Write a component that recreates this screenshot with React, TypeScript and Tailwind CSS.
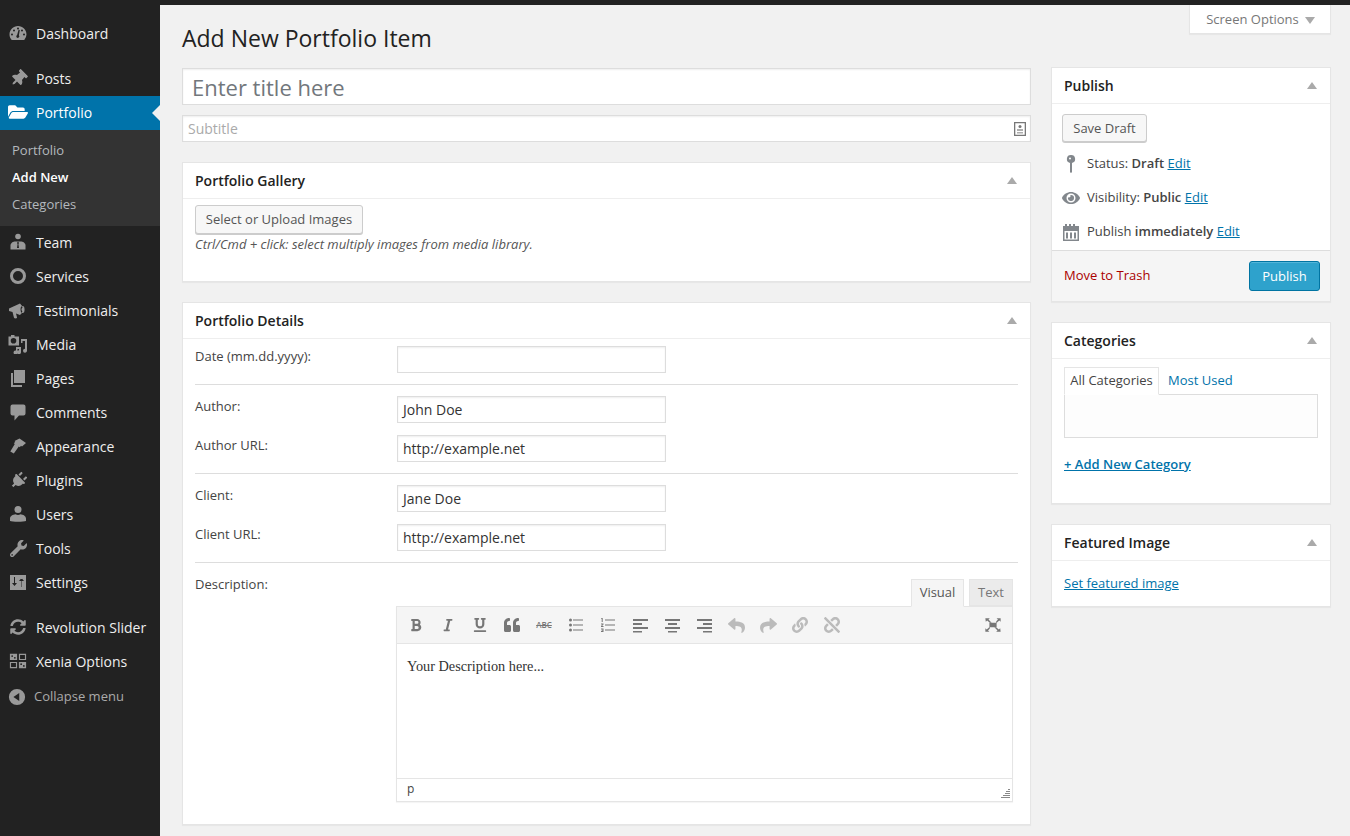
import type { ReactNode } from "react";
import {
  FaBold,
  FaItalic,
  FaUnderline,
  FaQuoteLeft,
  FaLink,
  FaUnlink,
  FaReply,
  FaShare,
  FaThumbtack,
  FaFolderOpen,
  FaPlug,
  FaWrench,
  FaSyncAlt,
  FaEye,
} from "react-icons/fa";

const Gauge = () => (
  <svg viewBox="0 0 20 20" className="w-5 h-5" fill="currentColor">
    <path d="M3.76 17h12.48A8.500 8.500 0 0 0 18.500 11.500c0-4.700-3.800-8.500-8.500-8.500s-8.500 3.800-8.500 8.500c0 2 .8 4 2.260 5.500zM10 4.500a1 1 0 1 1 0 2 1 1 0 0 1 0-2zM6 6.500a1 1 0 1 1 0 2 1 1 0 0 1 0-2zm8 0a1 1 0 1 1 0 2 1 1 0 0 1 0-2zM4 10.500a1 1 0 1 1 0 2 1 1 0 0 1 0-2zm12 0a1 1 0 1 1 0 2 1 1 0 0 1 0-2zm-4.200-3.400l-.9 5.200a1.500 1.500 0 1 1-1.800-.3l1.500-5.200z" fillRule="evenodd" />
  </svg>
);

const TeamIcon = () => (
  <svg viewBox="0 0 20 20" className="w-5 h-5" fill="currentColor">
    <circle cx="10" cy="4.500" r="2.800" />
    <path d="M2.500 17.500v-4C2.500 11 5 9.500 7.500 9.500h5c2.500 0 5 1.500 5 4v4z" />
    <path d="M10 9.500l-1 1.500.6 1-.6 4h2l-.6-4 .6-1z" fill="#222" />
  </svg>
);

const RingIcon = () => (
  <svg viewBox="0 0 20 20" className="w-5 h-5" fill="none" stroke="currentColor" strokeWidth="3">
    <circle cx="10" cy="10" r="6.500" />
  </svg>
);

const MegaphoneIcon = () => (
  <svg viewBox="0 0 20 20" className="w-5 h-5" fill="currentColor">
    <path fillRule="evenodd" d="M1 8.500L12 3.500a5 6.500 0 0 1 0 11.500L8 13.500 9 17.500c.2 1-2.500 1.300-3 .3L4.500 12 1 11zM14.500 6a2 3.500 0 1 0 .1 7 2 3.500 0 0 0-.1-7z" />
    <ellipse cx="14.500" cy="9.500" rx="1" ry="1.800" />
  </svg>
);

const MediaIcon = () => (
  <svg viewBox="0 0 20 20" className="w-5 h-5" fill="currentColor">
    <path fillRule="evenodd" d="M0.500 2.500h2.500V1h3.500v1.500H11v9H0.500zM5.500 4a2.800 2.800 0 1 0 0 5.600 2.800 2.800 0 0 0 0-5.600z" />
    <path d="M13 5h6v11.500a2 2 0 1 1-2-1.800V7h-2.500V9H13zM8 13h5v5a2 2 0 1 1-2-1.800V15H9.500v3a2 2 0 1 1-1.500-1.500z" />
  </svg>
);

const PagesIcon = () => (
  <svg viewBox="0 0 20 20" className="w-5 h-5" fill="currentColor">
    <path d="M6 2h11v13H6z" />
    <path d="M3 5h2v12h9v2H3z" />
  </svg>
);

const CommentIcon = () => (
  <svg viewBox="0 0 20 20" className="w-5 h-5" fill="currentColor">
    <path d="M4.500 2.500h11a2 2 0 0 1 2 2v7a2 2 0 0 1-2 2H11l-4.500 5V13.500h-2a2 2 0 0 1-2-2v-7a2 2 0 0 1 2-2z" />
  </svg>
);

const BrushIcon = () => (
  <svg viewBox="0 0 20 20" className="w-5 h-5" fill="currentColor">
    <path d="M11.500 2.500l6.500 4.500-4 3.500-1-.8-1.200 1.600-1-.7-5 7-3.500-2 4.500-7.500-1-.8 1.500-1.500-.8-.8z" />
  </svg>
);

const UserIcon = () => (
  <svg viewBox="0 0 20 20" className="w-5 h-5" fill="currentColor">
    <circle cx="10" cy="5.500" r="3.500" />
    <path d="M2 17v-2.500C2 12 5 10.500 7.500 10.200c1.500 1 3.500 1 5 0C15 10.500 18 12 18 14.500V17c-2 1-14 1-16 0z" />
  </svg>
);

const SettingsIcon = () => (
  <svg viewBox="0 0 20 20" className="w-5 h-5" fill="currentColor">
    <path fillRule="evenodd" d="M2 3h16v15H2zM6 5v6H4l2.500 3L9 11H7V5zm7.500 10v-6H16l-2.500-3L11 9h2v6z" />
    <path d="M5.500 14h2v2h-2zM12.500 5h2v2h-2z" />
  </svg>
);

const GridIcon = () => (
  <svg viewBox="0 0 20 20" className="w-[18px] h-[18px]" fill="currentColor">
    <path fillRule="evenodd" d="M1 2h8v7H1zm2.500 1.500a1 1 0 1 0 0 2 1 1 0 0 0 0-2zm3 2a1 1 0 1 0 0 2 1 1 0 0 0 0-2z" />
    <path fillRule="evenodd" d="M11 2h8v7h-8zm1.300 1.300v4.400h5.400V3.300zM1 11h8v7H1zm1.300 1.300v4.400h5.400v-4.400z" />
    <path fillRule="evenodd" d="M11 11h8v7h-8zm2.500 1.500a1 1 0 1 0 0 2 1 1 0 0 0 0-2zm3 2a1 1 0 1 0 0 2 1 1 0 0 0 0-2z" />
  </svg>
);

const CollapseIcon = () => (
  <svg viewBox="0 0 20 20" className="w-[18px] h-[18px]" fill="currentColor">
    <path fillRule="evenodd" d="M10 1a9 9 0 1 1 0 18 9 9 0 0 1 0-18zm2.500 4.500L6 10l6.500 4.500z" />
  </svg>
);

const PinIcon = () => (
  <svg viewBox="0 0 20 20" className="w-5 h-5" fill="currentColor">
    <path fillRule="evenodd" d="M10 1a4 4 0 0 1 1 7.900V18c0 1-2 1-2 0V8.900A4 4 0 0 1 10 1zM9 3.500a1 1 0 1 0 0 2 1 1 0 0 0 0-2z" />
  </svg>
);

const CalendarIcon = () => (
  <svg viewBox="0 0 20 20" className="w-5 h-5" fill="currentColor">
    <path fillRule="evenodd" d="M2 4h2V2h2v2h2V2h2v2h2V2h2v2h2V2h0v2h2v15H2zm1.500 5v8.500h13V9zM5 10.500h2v6H5zm4 0h2v6H9zm4 0h2v6h-2z" />
  </svg>
);

const FullscreenIcon = () => (
  <svg viewBox="0 0 20 20" className="w-[18px] h-[18px]" fill="currentColor">
    <path d="M6 7.500h8v5H6z" />
    <path d="M1.500 2.500h5L5 4l3.500 3.500h-2L3.500 5 2 6.500zM18.500 2.500v4L17 5l-3.500 3v-2L15.500 4 14 2.500zM1.500 17.500v-4L3 15l3.500-3v2L4.500 16 6 17.500zM18.500 17.500h-5L15 16l-3.500-3.500h2L16.500 15l1.500-1.500z" />
  </svg>
);

const TitleTag = () => (
  <svg viewBox="0 0 12 14" className="w-[12px] h-[14px] text-[#777]" fill="currentColor">
    <path fillRule="evenodd" d="M0 0h12v14H0zm1.300 1.300v11.400h9.400V1.300z" />
    <circle cx="6" cy="4.500" r="1.500" />
    <path d="M3 7h6v2H3zM3 10h6v1.500H3z" opacity="0.6" />
  </svg>
);

const BulletList = () => (
  <svg viewBox="0 0 16 16" className="w-4 h-4" fill="currentColor">
    <circle cx="2.500" cy="3" r="1.500" />
    <circle cx="2.500" cy="8" r="1.500" />
    <circle cx="2.500" cy="13" r="1.500" />
    <path d="M5 2.500h10v1H5zM5 7.500h10v1H5zM5 12.500h10v1H5z" />
  </svg>
);

const NumberList = () => (
  <svg viewBox="0 0 16 16" className="w-4 h-4" fill="currentColor">
    <path d="M1.500 1h1.200v4H1.700V2H1zM1 6.500h2.500v1L2 9h1.500v1H1V9l1.500-1.500H1zM1 11.500h2.500V15H1v-1h1.500v-.4H1.500v-.7h1v-.4H1z" />
    <path d="M5 2.500h10v1H5zM5 7.500h10v1H5zM5 12.500h10v1H5z" />
  </svg>
);

const AlignIcon = ({ d }: { d: string }) => (
  <svg viewBox="0 0 16 16" className="w-4 h-4" fill="currentColor">
    <path d={d} />
  </svg>
);

type MenuItem = { label: string; icon: ReactNode; shift?: boolean };

const topItems: MenuItem[] = [
  { label: "Team", icon: <TeamIcon /> },
  { label: "Services", icon: <RingIcon /> },
  { label: "Testimonials", icon: <MegaphoneIcon /> },
  { label: "Media", icon: <MediaIcon /> },
  { label: "Pages", icon: <PagesIcon /> },
  { label: "Comments", icon: <CommentIcon /> },
  { label: "Appearance", icon: <BrushIcon /> },
  { label: "Plugins", icon: <FaPlug size={17} className="rotate-45" /> },
  { label: "Users", icon: <UserIcon /> },
  { label: "Tools", icon: <FaWrench size={17} /> },
  { label: "Settings", icon: <SettingsIcon /> },
];

function SideItem({ label, icon, shift }: MenuItem) {
  return (
    <div className={`h-[34px] flex items-center text-[14px] text-[#eee] ${shift ? "pb-[2px]" : ""}`}>
      <span className="w-[36px] flex justify-center pl-[1px] pr-[1px] text-[#999]">{icon}</span>
      <span>{label}</span>
    </div>
  );
}

function Sidebar() {
  return (
    <aside className="w-[160px] shrink-0 bg-[#222] pt-[11px]">
      <SideItem label="Dashboard" icon={<Gauge />} />
      <div className="h-[11px]" />
      <SideItem label="Posts" icon={<FaThumbtack size={17} className="rotate-45" />} />
      <div className="h-[1px]" />
      <div className="relative h-[34px] pb-[2px] flex items-center bg-[#0073aa] text-white text-[14px]">
        <span className="w-[36px] flex justify-center">
          <FaFolderOpen size={20} />
        </span>
        <span>Portfolio</span>
        <span className="absolute right-0 top-[9px] w-0 h-0 border-y-[8px] border-y-transparent border-r-[8px] border-r-[#f1f1f1]" />
      </div>
      <div className="h-[96px] bg-[#333] pt-[7px] pl-[12px] text-[13px] text-[#b4b9be]">
        <div className="h-[27px] flex items-center">Portfolio</div>
        <div className="h-[27px] flex items-center font-semibold text-white">Add New</div>
        <div className="h-[27px] flex items-center">Categories</div>
      </div>
      {topItems.map((item) => (
        <SideItem key={item.label} {...item} shift />
      ))}
      <div className="h-[11px]" />
      <SideItem label="Revolution Slider" icon={<FaSyncAlt size={16} />} shift />
      <SideItem label="Xenia Options" icon={<GridIcon />} shift />
      <div className="h-[34px] pt-[2px] flex items-center text-[13px] text-[#aaa]">
        <span className="w-[34px] flex justify-center text-[#999]">
          <CollapseIcon />
        </span>
        <span>Collapse menu</span>
      </div>
    </aside>
  );
}

function Box({ title, className, children }: { title: string; className?: string; children: ReactNode }) {
  return (
    <section className={`bg-white border border-[#e5e5e5] shadow-[0_1px_1px_rgba(0,0,0,0.04)] ${className ?? ""}`}>
      <div className="h-[36px] flex items-center justify-between border-b border-[#eee] text-[14px] font-semibold text-[#222]">
        <span className="pl-[12px]">{title}</span>
        <span className="mr-[13px] w-0 h-0 border-x-[5px] border-x-transparent border-b-[7px] border-b-[#aaa]" />
      </div>
      {children}
    </section>
  );
}

function Field({ label, value, className }: { label: string; value?: string; className?: string }) {
  return (
    <div className={`flex items-start ${className ?? ""}`}>
      <label className="w-[202px] text-[13px] leading-[20px] text-[#444]">{label}</label>
      <div className="w-[269px] h-[27px] border border-[#ddd] shadow-[inset_0_1px_2px_rgba(0,0,0,0.07)] bg-white px-[5px] text-[14px] leading-[25px] text-[#333]">
        {value}
      </div>
    </div>
  );
}

function Editor() {
  const dark = "text-[#777]";
  const light = "text-[#bbb]";
  const tools: { key: string; node: ReactNode; color: string }[] = [
    { key: "bold", node: <FaBold size={14} />, color: dark },
    { key: "italic", node: <FaItalic size={14} />, color: dark },
    { key: "underline", node: <FaUnderline size={14} />, color: dark },
    { key: "quote", node: <FaQuoteLeft size={16} />, color: dark },
    {
      key: "strike",
      node: <span className="text-[8px] font-semibold line-through leading-none">ABC</span>,
      color: dark,
    },
    { key: "ul", node: <BulletList />, color: dark },
    { key: "ol", node: <NumberList />, color: dark },
    { key: "left", node: <AlignIcon d="M1 2h15v2H1zM1 6h9v2H1zM1 10h15v2H1zM1 14h9v1.500H1z" />, color: dark },
    { key: "center", node: <AlignIcon d="M1 2h15v2H1zM4 6h9v2H4zM1 10h15v2H1zM4 14h9v1.500H4z" />, color: dark },
    { key: "right", node: <AlignIcon d="M1 2h15v2H1zM7 6h9v2H7zM1 10h15v2H1zM7 14h9v1.500H7z" />, color: dark },
    { key: "undo", node: <FaReply size={17} />, color: light },
    { key: "redo", node: <FaShare size={17} />, color: light },
    { key: "link", node: <FaLink size={16} />, color: light },
    { key: "unlink", node: <FaUnlink size={16} />, color: light },
  ];
  return (
    <div className="w-[617px]">
      <div className="flex justify-end h-[28px] -mb-[1px] relative z-10">
        <div className="h-[28px] w-[53px] border border-[#e5e5e5] border-b-[#f5f5f5] bg-[#f5f5f5] text-[13px] text-[#555] flex items-center justify-center">
          Visual
        </div>
        <div className="h-[27px] w-[44px] ml-[5px] border border-[#e5e5e5] bg-[#ebebeb] text-[13px] text-[#777] flex items-center justify-center">
          Text
        </div>
      </div>
      <div className="border border-[#e5e5e5] shadow-[0_1px_1px_rgba(0,0,0,0.04)]">
        <div className="h-[37px] bg-[#f5f5f5] border-b border-[#e5e5e5] flex items-center pl-[3px] pr-[10px]">
          {tools.map((t) => (
            <span key={t.key} className={`w-[32px] flex justify-center ${t.color}`}>
              {t.node}
            </span>
          ))}
          <span className="ml-auto text-[#777]">
            <FullscreenIcon />
          </span>
        </div>
        <div className="h-[134px] bg-white px-[10px] pt-[12px] font-['Liberation_Serif',serif] text-[14.3px] leading-[20px] text-[#333]">
          Your Description here...
        </div>
        <div className="relative h-[23px] bg-white border-t border-[#e5e5e5] pl-[10px] text-[12px] leading-[20px] text-[#444]">
          p
          <svg viewBox="0 0 10 10" className="absolute right-[2px] bottom-[2px] w-[10px] h-[10px]" fill="#888">
            <path d="M8 0h2v1H8zM6 2h4v1H6zM5 4h5v1H5zM3 6h7v1H3zM1 8h9v1H1z" />
          </svg>
        </div>
      </div>
    </div>
  );
}

function MainColumn() {
  return (
    <div className="w-[849px] shrink-0">
      <h1 className="h-[63px] pt-[15px] text-[23px] leading-[37px] text-[#222]">Add New Portfolio Item</h1>
      <div className="h-[37px] border border-[#ddd] bg-white px-[9px] text-[22px] leading-[37px] text-[#72777c] shadow-[inset_0_1px_2px_rgba(0,0,0,0.07)]">
        Enter title here
      </div>
      <div className="mt-[10px] h-[27px] border border-[#ddd] bg-white pl-[5px] pr-[4px] flex items-center justify-between text-[14px] text-[#aaa] shadow-[inset_0_1px_2px_rgba(0,0,0,0.07)]">
        <span>Subtitle</span>
        <TitleTag />
      </div>

      <Box title="Portfolio Gallery" className="mt-[20px] h-[120px]">
        <div className="pl-[12px] pt-[6px]">
          <div className="w-[168px] h-[29px] border border-[#ccc] rounded-[3px] bg-[#f7f7f7] shadow-[0_1px_0_#ccc] text-[13px] text-[#555] flex items-center justify-center">
            Select or Upload Images
          </div>
          <p className="text-[13px] leading-[20px] italic text-[#555]">
            Ctrl/Cmd + click: select multiply images from media library.
          </p>
        </div>
      </Box>

      <Box title="Portfolio Details" className="mt-[20px] h-[523px]">
        <div className="pl-[12px] pr-[12px] pt-[7px]">
          <Field label="Date (mm.dd.yyyy):" />
          <div className="mt-[11px] mb-[11px] border-t border-[#ddd]" />
          <Field label="Author:" value="John Doe" />
          <Field label="Author URL:" value="http://example.net" className="mt-[12px]" />
          <div className="mt-[11px] mb-[11px] border-t border-[#ddd]" />
          <Field label="Client:" value="Jane Doe" />
          <Field label="Client URL:" value="http://example.net" className="mt-[12px]" />
          <div className="mt-[11px] border-t border-[#ddd]" />
          <div className="flex items-start pt-[16px]">
            <label className="w-[201px] mt-[-5px] text-[13px] leading-[20px] text-[#444]">Description:</label>
            <Editor />
          </div>
        </div>
      </Box>
    </div>
  );
}

function PublishRow({ icon, children }: { icon: ReactNode; children: ReactNode }) {
  return (
    <div className="h-[34px] pt-[2px] flex items-center text-[13px] text-[#444]">
      <span className="w-[25px] flex justify-center text-[#82878c] -ml-[4px] mr-[4px]">{icon}</span>
      <span>{children}</span>
    </div>
  );
}

function EditLink() {
  return <a className="text-[#0073aa] underline">Edit</a>;
}

function RightColumn() {
  return (
    <div className="w-[280px] shrink-0 ml-[20px] pt-[62px]">
      <Box title="Publish">
        <div className="pl-[10px] pt-[10px]">
          <div className="w-[85px] h-[28px] pt-[1px] border border-[#ccc] rounded-[3px] bg-[#f7f7f7] shadow-[0_1px_0_#ccc] text-[13px] text-[#555] flex items-center justify-center">
            Save Draft
          </div>
          <div className="mt-[4px]">
            <PublishRow icon={<PinIcon />}>
              Status: <b className="font-semibold">Draft</b> <EditLink />
            </PublishRow>
            <PublishRow icon={<FaEye size={18} />}>
              Visibility: <b className="font-semibold">Public</b> <EditLink />
            </PublishRow>
            <PublishRow icon={<CalendarIcon />}>
              Publish <b className="font-semibold">immediately</b> <EditLink />
            </PublishRow>
          </div>
        </div>
        <div className="mt-[2px] h-[51px] border-t border-[#ddd] bg-[#f5f5f5] pl-[12px] pr-[10px] flex items-center justify-between text-[13px]">
          <span className="text-[#a00]">Move to Trash</span>
          <div className="w-[71px] h-[30px] pt-[1px] rounded-[3px] border border-[#0074a2] bg-[#2ea2cc] text-white flex items-center justify-center shadow-[inset_0_1px_0_rgba(120,200,230,0.5)]">
            Publish
          </div>
        </div>
      </Box>

      <Box title="Categories" className="mt-[20px] h-[182px]">
        <div className="px-[12px] pt-[8px]">
          <div className="flex h-[28px] text-[13px] relative z-10">
            <div className="w-[95px] h-[28px] border border-[#e5e5e5] border-b-white bg-white text-[#444] flex items-center justify-center">
              All Categories
            </div>
            <div className="ml-[9px] h-[27px] flex items-center text-[#0073aa]">Most Used</div>
          </div>
          <div className="-mt-[1px] h-[44px] border border-[#ddd] bg-[#fdfdfd]" />
          <a className="block mt-[16px] text-[13px] font-semibold leading-[20px] text-[#0073aa] underline">
            + Add New Category
          </a>
        </div>
      </Box>

      <Box title="Featured Image" className="mt-[20px] h-[83px]">
        <a className="block pl-[12px] pt-[12px] text-[13px] leading-[20px] text-[#0073aa] underline">Set featured image</a>
      </Box>
    </div>
  );
}

export default function App() {
  return (
    <div className="h-[836px] overflow-hidden bg-[#f1f1f1] font-['Open_Sans',sans-serif]">
      <div className="h-[5px] bg-[#222]" />
      <div className="flex h-[831px]">
        <Sidebar />
        <div className="relative flex pl-[22px]">
          <MainColumn />
          <RightColumn />
          <div className="absolute left-[1029px] top-0 w-[142px] h-[29px] pt-[2px] pl-[1px] bg-white border border-t-0 border-[#e5e5e5] shadow-[0_1px_1px_rgba(0,0,0,0.04)] flex items-center justify-center gap-[6px] text-[13px] text-[#777]">
            Screen Options
            <span className="w-0 h-0 border-x-[5px] border-x-transparent border-t-[7px] border-t-[#aaa]" />
          </div>
        </div>
      </div>
    </div>
  );
}
